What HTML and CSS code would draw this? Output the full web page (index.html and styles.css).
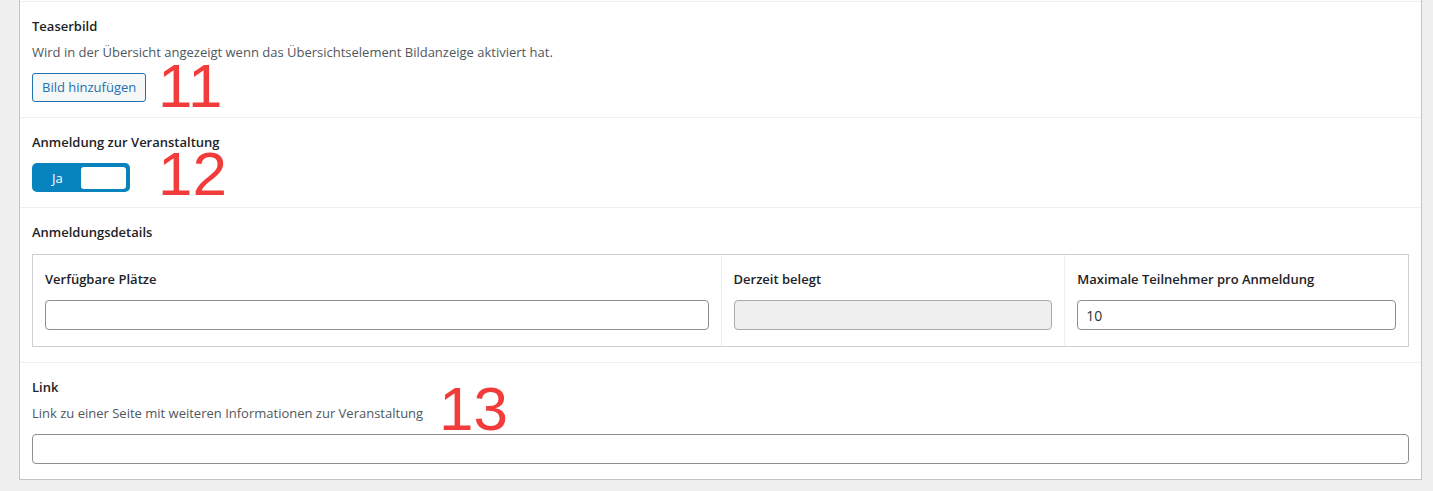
FILE: index.html
```html
<!DOCTYPE html>
<html lang="de">
<head>
<meta charset="UTF-8">
<meta name="viewport" content="width=device-width, initial-scale=1.0">
<title>Veranstaltung bearbeiten</title>
<link rel="stylesheet" href="styles.css">
</head>
<body>

<div class="wrap">
  <div class="panel">

    <div class="field">
      <div class="field-label">Teaserbild</div>
      <p class="field-desc">Wird in der Übersicht angezeigt wenn das Übersichtselement Bildanzeige aktiviert hat.</p>
      <div class="field-row">
        <button class="button" type="button">Bild hinzufügen</button>
        <span class="marker marker-11">11</span>
      </div>
    </div>

    <div class="field">
      <div class="field-label">Anmeldung zur Veranstaltung</div>
      <div class="field-row switch-row">
        <label class="switch">
          <span class="switch-on">Ja</span>
          <span class="switch-knob"></span>
        </label>
        <span class="marker marker-12">12</span>
      </div>
    </div>

    <div class="field">
      <div class="field-label field-label-group">Anmeldungsdetails</div>
      <div class="group">
        <div class="group-cell cell-wide">
          <div class="field-label">Verfügbare Plätze</div>
          <input class="text-input" type="text">
        </div>
        <div class="group-cell">
          <div class="field-label">Derzeit belegt</div>
          <input class="text-input" type="text" disabled>
        </div>
        <div class="group-cell">
          <div class="field-label">Maximale Teilnehmer pro Anmeldung</div>
          <input class="text-input" type="text" value="10">
        </div>
      </div>
    </div>

    <div class="field">
      <div class="field-label">Link</div>
      <div class="field-row">
        <p class="field-desc">Link zu einer Seite mit weiteren Informationen zur Veranstaltung</p>
        <span class="marker marker-13">13</span>
      </div>
      <input class="text-input" type="text">
    </div>

  </div>
</div>

</body>
</html>
```

FILE: styles.css
```css
body {
  font-family: 'Open Sans', 'Noto Sans', sans-serif;
  font-size: 13px;
  line-height: 18px;
  margin: 0;
  padding: 0;
  background-color: #f0f0f1;
  color: #1d2327;
}

.wrap {
  padding: 0 11px 11px 19px;
}

.panel {
  background: #fff;
  border: 1px solid #c3c4c7;
  border-top: none;
  padding-top: 1px;
}

.field {
  padding: 15px 12px;
  border-top: 1px solid #eeeeee;
}

.field-label {
  font-weight: 600;
  margin-bottom: 8px;
}

.field-label-group {
  margin-bottom: 13px;
}

.field-desc {
  margin: 0 0 12px;
  color: #50575e;
}

.field-row {
  position: relative;
}

.switch-row {
  padding-top: 4px;
}

/* red annotation numbers drawn over the screenshot */
.marker {
  position: absolute;
  font-family: 'Liberation Sans', Arial, sans-serif;
  font-size: 62px;
  line-height: 46px;
  color: #f23b3b;
}

.marker-11 {
  left: 126px;
  top: -10px;
}

.marker-12 {
  left: 126px;
  top: -8px;
}

.marker-13 {
  left: 407px;
  top: -18px;
}

.button {
  display: block;
  font-family: inherit;
  font-size: 13px;
  line-height: 27px;
  height: 29px;
  padding: 0 9px;
  color: #2271b1;
  background: #f6f7f7;
  border: 1px solid #2271b1;
  border-radius: 3px;
  cursor: pointer;
}

.switch {
  display: flex;
  align-items: center;
  justify-content: space-between;
  width: 98px;
  height: 29px;
  box-sizing: border-box;
  padding: 0 4px 0 20px;
  background: #0783be;
  border-radius: 5px;
  color: #fff;
  cursor: pointer;
}

.switch-on {
  font-size: 13px;
}

.switch-knob {
  width: 45px;
  height: 22px;
  background: #fff;
  border-radius: 3px;
}

.group {
  display: grid;
  grid-template-columns: 2fr 1fr 1fr;
  border: 1px solid #ccd0d4;
}

.group-cell {
  padding: 15px 12px 16px;
  border-left: 1px solid #eeeeee;
}

.group-cell.cell-wide {
  border-left: none;
}

.group-cell .field-label {
  margin-bottom: 12px;
}

.text-input {
  display: block;
  width: 100%;
  box-sizing: border-box;
  height: 30px;
  padding: 0 8px;
  font-family: inherit;
  font-size: 14px;
  color: #2c3338;
  background: #fff;
  border: 1px solid #8c8f94;
  border-radius: 4px;
}

.text-input:disabled {
  background: #f0f0f1;
  border-color: #a7aaad;
}
```
